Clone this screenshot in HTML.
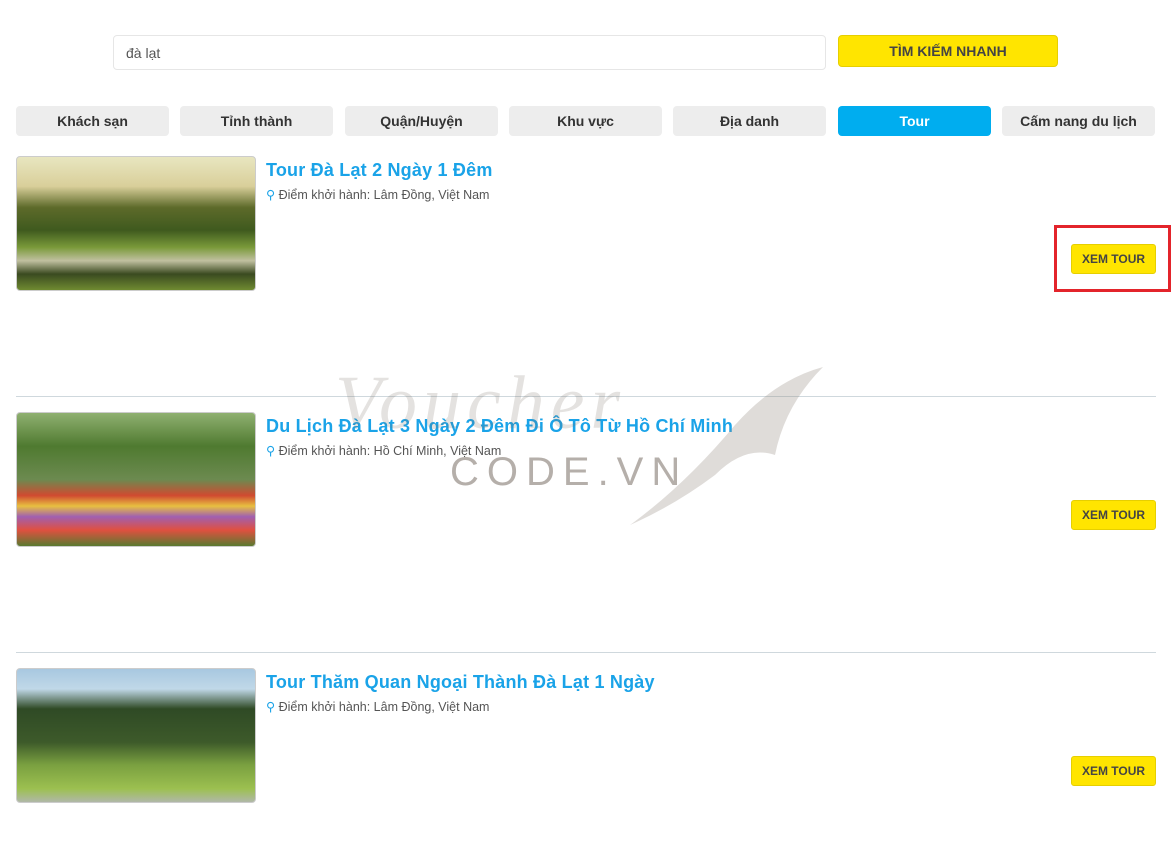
<!DOCTYPE html>
<html><head><meta charset="utf-8"><style>
*{box-sizing:border-box;margin:0;padding:0}
body{width:1176px;height:850px;background:#fff;font-family:"Liberation Sans","DejaVu Sans",sans-serif;position:relative;overflow:hidden;color:#444}
.inp{position:absolute;left:113px;top:35px;width:713px;height:35px;border:1px solid #e6e6e6;border-radius:4px;font-size:14px;color:#555;padding:9px 12px}
.sbtn{position:absolute;left:838px;top:35px;width:220px;height:32px;background:#ffe500;border:1px solid #e6cf00;border-radius:4px;font-weight:bold;font-size:14px;color:#444;text-align:center;line-height:30px}
.tab{position:absolute;top:106px;width:153px;height:30px;background:#ededed;border-radius:4px;font-weight:bold;font-size:14px;color:#333;text-align:center;line-height:30px}
.tab.on{background:#00adef;color:#fff}
.img{position:absolute;left:16px;width:240px;height:135px;border:1px solid #ccc;border-radius:4px;overflow:hidden}
.t{position:absolute;left:266px;font-size:18px;font-weight:bold;color:#1aa3e8;letter-spacing:0.2px}
.s{position:absolute;left:266px;font-size:12.5px;color:#555}
.s b{color:#1aa3e8;font-weight:normal}
.x{position:absolute;left:1071px;width:85px;height:30px;background:#ffe500;border:1px solid #e6cf00;border-radius:3px;font-weight:bold;font-size:12px;color:#444;text-align:center;line-height:28px}
.hr{position:absolute;left:16px;width:1140px;border-top:1px solid #cfd8dd}
</style></head><body>
<div class="inp">đà lạt</div>
<div class="sbtn">TÌM KIẾM NHANH</div>
<div class="tab" style="left:16px">Khách sạn</div>
<div class="tab" style="left:180px">Tỉnh thành</div>
<div class="tab" style="left:345px">Quận/Huyện</div>
<div class="tab" style="left:509px">Khu vực</div>
<div class="tab" style="left:673px">Địa danh</div>
<div class="tab on" style="left:838px">Tour</div>
<div class="tab" style="left:1002px">Cấm nang du lịch</div>

<div class="img" style="top:156px;background:linear-gradient(180deg,#e8e6c0 0%,#d9cf9a 22%,#5d6a2a 38%,#3f5a1e 55%,#7a9a3a 68%,#c0c0a0 78%,#3a4a20 88%,#6f8a30 100%)"></div>
<div class="t" style="top:160px">Tour Đà Lạt 2 Ngày 1 Đêm</div>
<div class="s" style="top:187px"><b>⚲</b> Điểm khởi hành: Lâm Đồng, Việt Nam</div>
<div class="x" style="top:244px">XEM TOUR</div>
<div style="position:absolute;left:1054px;top:225px;width:117px;height:67px;border:3px solid #e3242b"></div>

<div class="hr" style="top:396px"></div>
<div class="img" style="top:412px;background:linear-gradient(180deg,#8fb070 0%,#4f7a30 25%,#6c8a50 50%,#d04a30 62%,#e8c040 70%,#a060b0 78%,#e05040 88%,#5a7a30 100%)"></div>
<div class="t" style="top:416px">Du Lịch Đà Lạt 3 Ngày 2 Đêm Đi Ô Tô Từ Hồ Chí Minh</div>
<div class="s" style="top:443px"><b>⚲</b> Điểm khởi hành: Hồ Chí Minh, Việt Nam</div>
<div class="x" style="top:500px">XEM TOUR</div>

<div class="hr" style="top:652px"></div>
<div class="img" style="top:668px;background:linear-gradient(180deg,#a8c8e0 0%,#c0d8e8 15%,#2f4a25 30%,#3d5a2a 55%,#7aa040 72%,#9cc050 90%,#b0b8a8 100%)"></div>
<div class="t" style="top:672px">Tour Thăm Quan Ngoại Thành Đà Lạt 1 Ngày</div>
<div class="s" style="top:699px"><b>⚲</b> Điểm khởi hành: Lâm Đồng, Việt Nam</div>
<div class="x" style="top:756px">XEM TOUR</div>

<div style="position:absolute;left:335px;top:360px;font-family:'Liberation Serif',serif;font-style:italic;font-size:76px;color:rgba(120,110,100,0.2);letter-spacing:6px">Voucher</div>
<div style="position:absolute;left:450px;top:450px;font-size:40px;color:rgba(120,110,100,0.55);letter-spacing:8px">CODE.VN</div>
<svg style="position:absolute;left:625px;top:365px" width="200" height="165"><path d="M5 160 Q60 120 110 60 Q150 15 198 2 Q160 40 150 90 Q120 80 90 110 Q50 140 5 160Z" fill="rgba(150,140,130,0.3)"/></svg>
</body></html>
